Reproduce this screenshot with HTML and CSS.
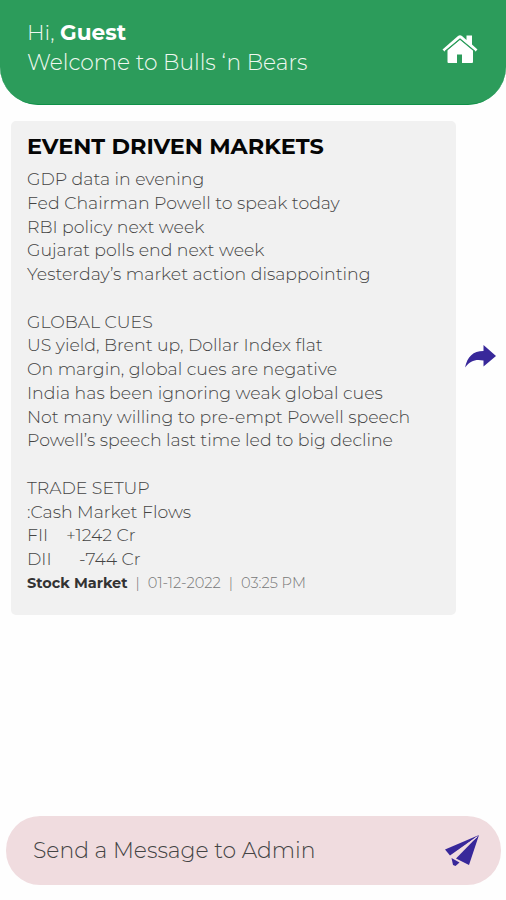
FILE: index.html
```html
<!DOCTYPE html>
<html lang="en">
<head>
  <meta charset="UTF-8" />
  <meta name="viewport" content="width=device-width, initial-scale=1.0" />
  <title>Bulls 'n Bears</title>
  <link rel="stylesheet" href="styles.css">
</head>
<body>

  <!-- Greeting bar -->
  <header class="top-bar">
    <div class="greeting">
      <p class="hello">Hi, <strong>Guest</strong></p>
      <p class="welcome">Welcome to Bulls ‘n Bears</p>
    </div>
    <a class="home-link" href="#" aria-label="Home">
      <svg width="36" height="30" viewBox="0 0 36 30" fill="#fff">
        <path d="M18 5.500 5.500 16V28a1 1 0 0 0 1 1H15V20.500h5V29h10a1 1 0 0 0 1-1V16Z" />
        <path d="M0.500 15.500 16 2Q18 .5 20 2L24.500 6V1.500h5.500V10.500L35.500 15.500 33.500 17.500 18 4.800 2.500 17.500Z" />
        <path d="M3.300 17.300 18 5 32.700 17.300" fill="none" stroke="#2c9c5b" stroke-width="1.200" />
      </svg>
    </a>
  </header>

  <!-- Message list -->
  <main class="messages">
    <article class="message">
      <h2 class="message-title">EVENT DRIVEN MARKETS</h2>
      <div class="message-text">
        <p>GDP data in evening</p>
        <p>Fed Chairman Powell to speak today</p>
        <p>RBI policy next week</p>
        <p>Gujarat polls end next week</p>
        <p>Yesterday’s market action disappointing</p>
        <p class="gap">GLOBAL CUES</p>
        <p>US yield, Brent up, Dollar Index flat</p>
        <p>On margin, global cues are negative</p>
        <p>India has been ignoring weak global cues</p>
        <p>Not many willing to pre-empt Powell speech</p>
        <p>Powell’s speech last time led to big decline</p>
        <p class="gap">TRADE SETUP</p>
        <p>:Cash Market Flows</p>
        <p class="flow"><span class="flow-fii">FII</span>+1242 Cr</p>
        <p class="flow"><span class="flow-dii">DII</span>-744 Cr</p>
      </div>
      <p class="message-meta"><strong>Stock Market</strong><span>|</span><span>01-12-2022</span><span>|</span><span>03:25 PM</span></p>
    </article>
    <a class="share" href="#" aria-label="Share">
      <svg width="32" height="23" viewBox="0 0 32 23" fill="#38289a">
        <path d="M0 22.500C2.500 11.500 8 6 18.500 6V0L31 11 18.500 21.500V15.500C10.500 14 5.500 15.500 0 22.500Z" />
      </svg>
    </a>
  </main>

  <!-- Message box -->
  <footer class="send-box">
    <span class="send-label">Send a Message to Admin</span>
    <a class="send-button" href="#" aria-label="Send">
      <svg width="36" height="33" viewBox="0 0 36 33" fill="#38289a">
        <path d="M35 1 1 15.500 6 21.500Z" />
        <path d="M35 1 12 24.500 25 31Z" />
        <path d="M7.500 24 15.500 28.500 11.500 32 9 31Z" />
        <path d="M33 3 6.500 22.500" fill="none" stroke="#f0dcdf" stroke-width="1" />
      </svg>
    </a>
  </footer>

</body>
</html>
```
FILE: styles.css
```css
* {
  box-sizing: border-box;
}
body {
  font-family: Montserrat, Inter, sans-serif;
  margin: 0;
  height: 900px;
  display: flex;
  flex-direction: column;
  background-color: #fefefe;
  overflow: hidden;
}
p, h2 {
  margin: 0;
  white-space: nowrap;
}
a, svg {
  display: block;
}
.top-bar {
  height: 105px;
  padding: 17px 28px 0 27px;
  display: flex;
  justify-content: space-between;
  background-color: #2c9c5b;
  border-bottom: 1px solid #0f9048;
  border-radius: 0 0 38px 38px;
  color: #f0f8f0;
}
.greeting {
  font-size: 21.8px;
  font-weight: 300;
  line-height: 30px;
}
.hello {
  font-size: 21.6px;
}
.hello strong {
  font-weight: 700;
  color: white;
}
.home-link {
  margin-top: 17px;
}
.messages {
  flex: 1;
  display: flex;
  align-items: flex-start;
  padding: 16px 9px 0 11px;
}
.message {
  width: 445px;
  height: 494px;
  padding: 12px 16px;
  background-color: #f1f1f1;
  border-radius: 5px;
  color: #444;
}
.message-title {
  font-size: 22.4px;
  font-weight: 700;
  line-height: 27px;
  color: #050505;
}
.message-text {
  padding-top: 7px;
  font-size: 17.35px;
  font-weight: 300;
  line-height: 23.75px;
}
.message-text .gap {
  margin-top: 23.75px;
}
.flow {
  display: flex;
}
.flow-fii {
  width: 39px;
}
.flow-dii {
  width: 52px;
}
.message-meta {
  display: flex;
  gap: 8px;
  font-size: 14.6px;
  font-weight: 300;
  line-height: 25px;
  color: #777;
}
.message-meta strong {
  font-size: 14.5px;
  font-weight: 700;
  color: #333;
}
.share {
  margin: 224px 0 0 9px;
}
.send-box {
  height: 69px;
  margin: 0 5px 15px 6px;
  padding: 0 21px 0 27px;
  display: flex;
  align-items: center;
  justify-content: space-between;
  background-color: #f0dcdf;
  border-radius: 34px;
}
.send-label {
  padding-bottom: 2px;
  font-size: 21.9px;
  font-weight: 300;
  color: #444;
}
```
